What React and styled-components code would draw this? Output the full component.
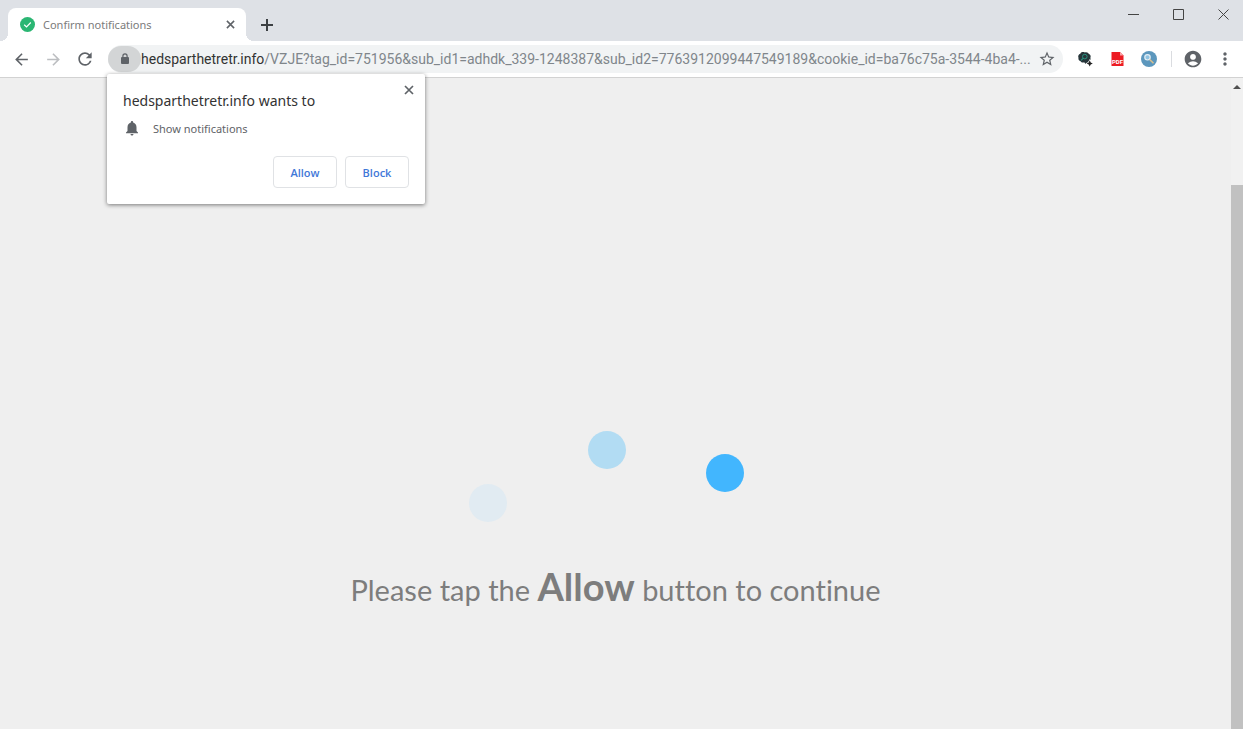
import React, { useState } from "react";
import styled, { createGlobalStyle } from "styled-components";
import {
  MdAccountCircle,
  MdArrowBack,
  MdArrowForward,
  MdMoreVert,
  MdNotifications,
  MdRefresh,
  MdStarBorder,
} from "react-icons/md";

const HOST = "hedsparthetretr.info";
const PATH =
  "/VZJE?tag_id=751956&sub_id1=adhdk_339-1248387&sub_id2=7763912099447549189&cookie_id=ba76c75a-3544-4ba4-...";

const App = () => {
  const [promptOpen, setPromptOpen] = useState(true);
  const [path, setPath] = useState(PATH);

  const closePrompt = () => setPromptOpen(false);

  return (
    <Browser>
      <GlobalStyle />

      <TabStrip>
        <Tab>
          <CheckIcon />
          <TabTitle>Confirm notifications</TabTitle>
          <TabClose aria-label="Close tab">
            <CrossIcon size={9} />
          </TabClose>
        </Tab>
        <NewTab aria-label="New tab">
          <PlusIcon />
        </NewTab>
        <WindowControls>
          <WindowButton aria-label="Minimize">
            <svg width="11" height="11">
              <path d="M0 5.5h11" stroke="currentColor" />
            </svg>
          </WindowButton>
          <WindowButton aria-label="Maximize">
            <svg width="11" height="11" fill="none">
              <path d="M.5 .5h10v10h-10z" stroke="currentColor" />
            </svg>
          </WindowButton>
          <WindowButton aria-label="Close">
            <svg width="11" height="11">
              <path d="M.5 .5l10 10M10.5 .5l-10 10" stroke="currentColor" />
            </svg>
          </WindowButton>
        </WindowControls>
      </TabStrip>

      <Toolbar>
        <ToolButton aria-label="Back">
          <MdArrowBack size={19} />
        </ToolButton>
        <ToolButton aria-label="Forward" $muted>
          <MdArrowForward size={19} />
        </ToolButton>
        <ToolButton aria-label="Reload">
          <MdRefresh size={20} />
        </ToolButton>

        <AddressBar>
          <SiteInfo aria-label="View site information">
            <LockIcon />
          </SiteInfo>
          <Host htmlFor="address">{HOST}</Host>
          <Address
            id="address"
            value={path}
            spellCheck={false}
            onChange={(e) => setPath(e.target.value)}
          />
          <Bookmark aria-label="Bookmark this page">
            <MdStarBorder size={18} />
          </Bookmark>

          {promptOpen && (
            <Prompt role="dialog" aria-labelledby="prompt-title">
              <PromptHead>
                <PromptTitle id="prompt-title">{HOST} wants to</PromptTitle>
                <PromptClose aria-label="Close" onClick={closePrompt}>
                  <CrossIcon size={10} />
                </PromptClose>
              </PromptHead>
              <Permission>
                <MdNotifications size={18} />
                Show notifications
              </Permission>
              <PromptActions>
                <PromptButton onClick={closePrompt}>Allow</PromptButton>
                <PromptButton onClick={closePrompt}>Block</PromptButton>
              </PromptActions>
            </Prompt>
          )}
        </AddressBar>

        <ToolButton aria-label="Search extension">
          <BrainIcon />
        </ToolButton>
        <ToolButton aria-label="PDF extension">
          <PdfIcon />
        </ToolButton>
        <ToolButton aria-label="Lookup extension">
          <LensIcon />
        </ToolButton>
        <Divider />
        <ToolButton aria-label="Profile">
          <MdAccountCircle size={20} />
        </ToolButton>
        <ToolButton aria-label="Menu">
          <MdMoreVert size={20} />
        </ToolButton>
      </Toolbar>

      <Viewport>
        <Page>
          <Loader />
          <Message>
            Please tap the <strong>Allow</strong> button to continue
          </Message>
        </Page>
        <ScrollTrack>
          <ScrollUp aria-label="Scroll up">
            <svg width="8" height="4">
              <path d="M0 4l4-4 4 4z" fill="#505050" />
            </svg>
          </ScrollUp>
          <ScrollThumb />
        </ScrollTrack>
      </Viewport>
    </Browser>
  );
};

export default App;

const CheckIcon = () => (
  <svg width="15" height="15" viewBox="0 0 15 15" fill="none">
    <circle cx="7.5" cy="7.5" r="7.5" fill="#2bb673" />
    <path d="M4.2 7.8l2.3 2.1 4.3-4.4" stroke="#fff" strokeWidth="1.2" />
  </svg>
);

const CrossIcon = ({ size }) => (
  <svg width={size} height={size} viewBox="0 0 10 10">
    <path d="M1 1l8 8M9 1l-8 8" stroke="currentColor" strokeWidth="1.700" />
  </svg>
);

const PlusIcon = () => (
  <svg width="12" height="12" viewBox="0 0 12 12">
    <path d="M6 0v12M0 6h12" stroke="currentColor" strokeWidth="2" />
  </svg>
);

const LockIcon = () => (
  <svg width="10" height="12" viewBox="0 0 10 12" fill="none">
    <rect x="1" y="4" width="8" height="7" rx="1" fill="currentColor" />
    <path
      d="M2.9 4.500V3a2.100 2.100 0 0 1 4.200 0v1.500"
      stroke="currentColor"
      strokeWidth="1.200"
    />
  </svg>
);

const BrainIcon = () => (
  <svg width="17" height="16" viewBox="0 0 17 16" fill="none">
    <path
      d="M1.500 7C.600 5 1.800 3 3.300 2.700 4.300 1 6.500.800 7.800 1.500c1.700-.8 3.500 0 4 1.400 1.700.5 2.300 2.300 1.600 3.800.5 1.700-.3 3-1.600 3.500L11 12.500 8.500 13l-1.300-1.700c-1.500.5-3 .2-3.600-1C2.200 10 1 8.500 1.500 7z"
      fill="#263439"
    />
    <circle cx="7.800" cy="5.600" r="2.300" stroke="#26917f" />
    <path d="M6.100 7.300L4 9.400" stroke="#26917f" strokeWidth="1.200" />
    <path
      d="M12.700 8l1.500 2.900 2.900 1.500-2.900 1.500-1.500 2.900-1.500-2.900-2.900-1.500 2.900-1.500z"
      fill="#fff"
    />
    <path
      d="M12.700 9.300l1 2.100 2.100 1-2.100 1-1 2.100-1-2.100-2.100-1 2.100-1z"
      fill="#222"
    />
  </svg>
);

const PdfIcon = () => (
  <svg width="13" height="16" viewBox="0 0 13 16">
    <path d="M1 1h8l3.500 3.500V15H.5V1z" fill="#ec1c24" />
    <path d="M9 1v3.500h3.500z" fill="#f9a3a6" />
    <text
      x="6.5"
      y="12.800"
      fill="#fff"
      fontFamily="Roboto, sans-serif"
      fontWeight="700"
      fontSize="6"
      textAnchor="middle"
    >
      PDF
    </text>
  </svg>
);

const LensIcon = () => (
  <svg width="16" height="16" viewBox="0 0 16 16" fill="none">
    <circle cx="8" cy="8" r="8" fill="#5c97bd" />
    <circle
      cx="6.500"
      cy="6.300"
      r="2.700"
      fill="#8fc3e2"
      stroke="#e4eef4"
      strokeWidth="1.200"
    />
    <path d="M8.700 8.500l3.800 3.800" stroke="#d9c18f" strokeWidth="1.600" />
  </svg>
);

const Loader = () => (
  <svg width="294" height="92" viewBox="0 0 294 92">
    <circle cx="19" cy="72" r="19" fill="#e1ebf2" />
    <circle cx="138" cy="19" r="19" fill="#b2dcf3" />
    <circle cx="256" cy="42" r="19" fill="#42b6fe" />
  </svg>
);

const GlobalStyle = createGlobalStyle`
  * {
    box-sizing: border-box;
  }

  body {
    margin: 0;
    font-family: "Noto Sans", "Open Sans", sans-serif;
    font-size: 11px;
    color: #333;
  }

  button,
  input {
    margin: 0;
    padding: 0;
    border: 0;
    background: none;
    font: inherit;
    color: inherit;
  }

  svg {
    display: block;
    flex-shrink: 0;
  }
`;

const Browser = styled.div`
  display: flex;
  flex-direction: column;
  height: 100vh;
  overflow: hidden;
  background: #efefef;
`;

const TabStrip = styled.header`
  display: flex;
  align-items: flex-end;
  padding-left: 8px;
  height: 41px;
  background: #dee1e6;
`;

const Tab = styled.div`
  position: relative;
  display: flex;
  align-items: center;
  gap: 8px;
  width: 238px;
  height: 33px;
  padding: 0 8px 0 12px;
  border-radius: 8px 8px 0 0;
  background: #fff;

  /* flared feet of the active tab */
  &::before,
  &::after {
    content: "";
    position: absolute;
    bottom: 0;
    width: 8px;
    height: 8px;
  }

  &::before {
    right: 100%;
    background: radial-gradient(circle at 0 0, transparent 8px, #fff 8px);
  }

  &::after {
    left: 100%;
    background: radial-gradient(circle at 100% 0, transparent 8px, #fff 8px);
  }
`;

const TabTitle = styled.span`
  flex: 1;
  color: #7b7b7b;
  white-space: nowrap;
`;

const IconButton = styled.button`
  display: flex;
  align-items: center;
  justify-content: center;
  flex-shrink: 0;
  color: #5f6368;
`;

const TabClose = styled(IconButton)`
  width: 16px;
  height: 16px;
`;

const NewTab = styled(IconButton)`
  width: 28px;
  height: 33px;
  margin-left: 7px;
  color: #3c4043;
`;

const WindowControls = styled.div`
  display: flex;
  align-self: flex-start;
  margin: 0 -3px 0 auto;
`;

const WindowButton = styled(IconButton)`
  width: 45px;
  height: 29px;
  color: #444;
`;

const Toolbar = styled.nav`
  display: flex;
  align-items: center;
  height: 37px;
  padding: 0 2px 0 5px;
  border-bottom: 1px solid #d2d2d2;
  background: #fff;
`;

const ToolButton = styled(IconButton)`
  width: 32px;
  height: 28px;
  color: ${(props) => (props.$muted ? "#bcbec1" : "#5f6368")};
`;

const Divider = styled.span`
  width: 1px;
  height: 16px;
  margin: 0 5px 0 6px;
  background: #dadce0;
`;

const AddressBar = styled.div`
  position: relative;
  display: flex;
  align-items: center;
  flex: 1;
  min-width: 0;
  height: 28px;
  margin: 0 6px 0 7px;
  border-radius: 14px;
  background: #f1f3f4;
  font-family: Roboto, sans-serif;
  font-size: 14px;
`;

const SiteInfo = styled(IconButton)`
  width: 33px;
  height: 26px;
  border-radius: 13px;
  background: #d3d5d6;
`;

const Host = styled.label`
  color: #333;
`;

const Address = styled.input`
  flex: 1;
  min-width: 0;
  height: 28px;
  outline: none;
  color: #80868b;
`;

const Bookmark = styled(IconButton)`
  width: 32px;
  height: 28px;
`;

const Prompt = styled.section`
  position: absolute;
  z-index: 1;
  top: calc(100% + 1px);
  left: -1px;
  width: 318px;
  padding: 16px;
  border-radius: 2px;
  background: #fff;
  box-shadow: 0 1px 4px rgba(0, 0, 0, 0.5);
  font-family: "Noto Sans", "Open Sans", sans-serif;
`;

const PromptHead = styled.div`
  display: flex;
  align-items: center;
  justify-content: space-between;
  height: 20px;
`;

const PromptTitle = styled.h1`
  margin: 0;
  font-size: 14px;
  font-weight: 400;
`;

const PromptClose = styled(IconButton)`
  align-self: flex-start;
  width: 16px;
  height: 16px;
  margin: -8px -8px 0 0;
`;

const Permission = styled.p`
  display: flex;
  align-items: center;
  gap: 12px;
  height: 18px;
  margin: 9px 0 19px;
  font-size: 11px;
  color: #5f6368;
`;

const PromptActions = styled.div`
  display: flex;
  justify-content: flex-end;
  gap: 8px;
`;

const PromptButton = styled.button`
  width: 64px;
  height: 32px;
  border: 1px solid #e0e2e5;
  border-radius: 4px;
  font-family: "Open Sans", sans-serif;
  font-size: 11px;
  font-weight: 600;
  color: #3f78d8;
`;

const Viewport = styled.div`
  display: flex;
  flex: 1;
  min-height: 0;
`;

const Page = styled.main`
  display: flex;
  flex-direction: column;
  align-items: center;
  flex: 1;

  &::before {
    content: "";
    flex: 3;
  }

  &::after {
    content: "";
    flex: 1;
  }
`;

const Message = styled.p`
  margin: 44px 0 0;
  font-family: Lato, sans-serif;
  font-size: 29px;
  font-variant-ligatures: none;
  line-height: 42px;
  color: #7d7d7d;

  strong {
    font-size: 38px;
    font-weight: 700;
    line-height: 1;
  }
`;

const ScrollTrack = styled.div`
  display: flex;
  flex-direction: column;
  width: 12px;
  background: #f1f1f1;
`;

const ScrollUp = styled(IconButton)`
  height: 17px;
`;

const ScrollThumb = styled.div`
  flex: 1;
  margin-top: 90px;
  background: #c1c1c1;
`;
